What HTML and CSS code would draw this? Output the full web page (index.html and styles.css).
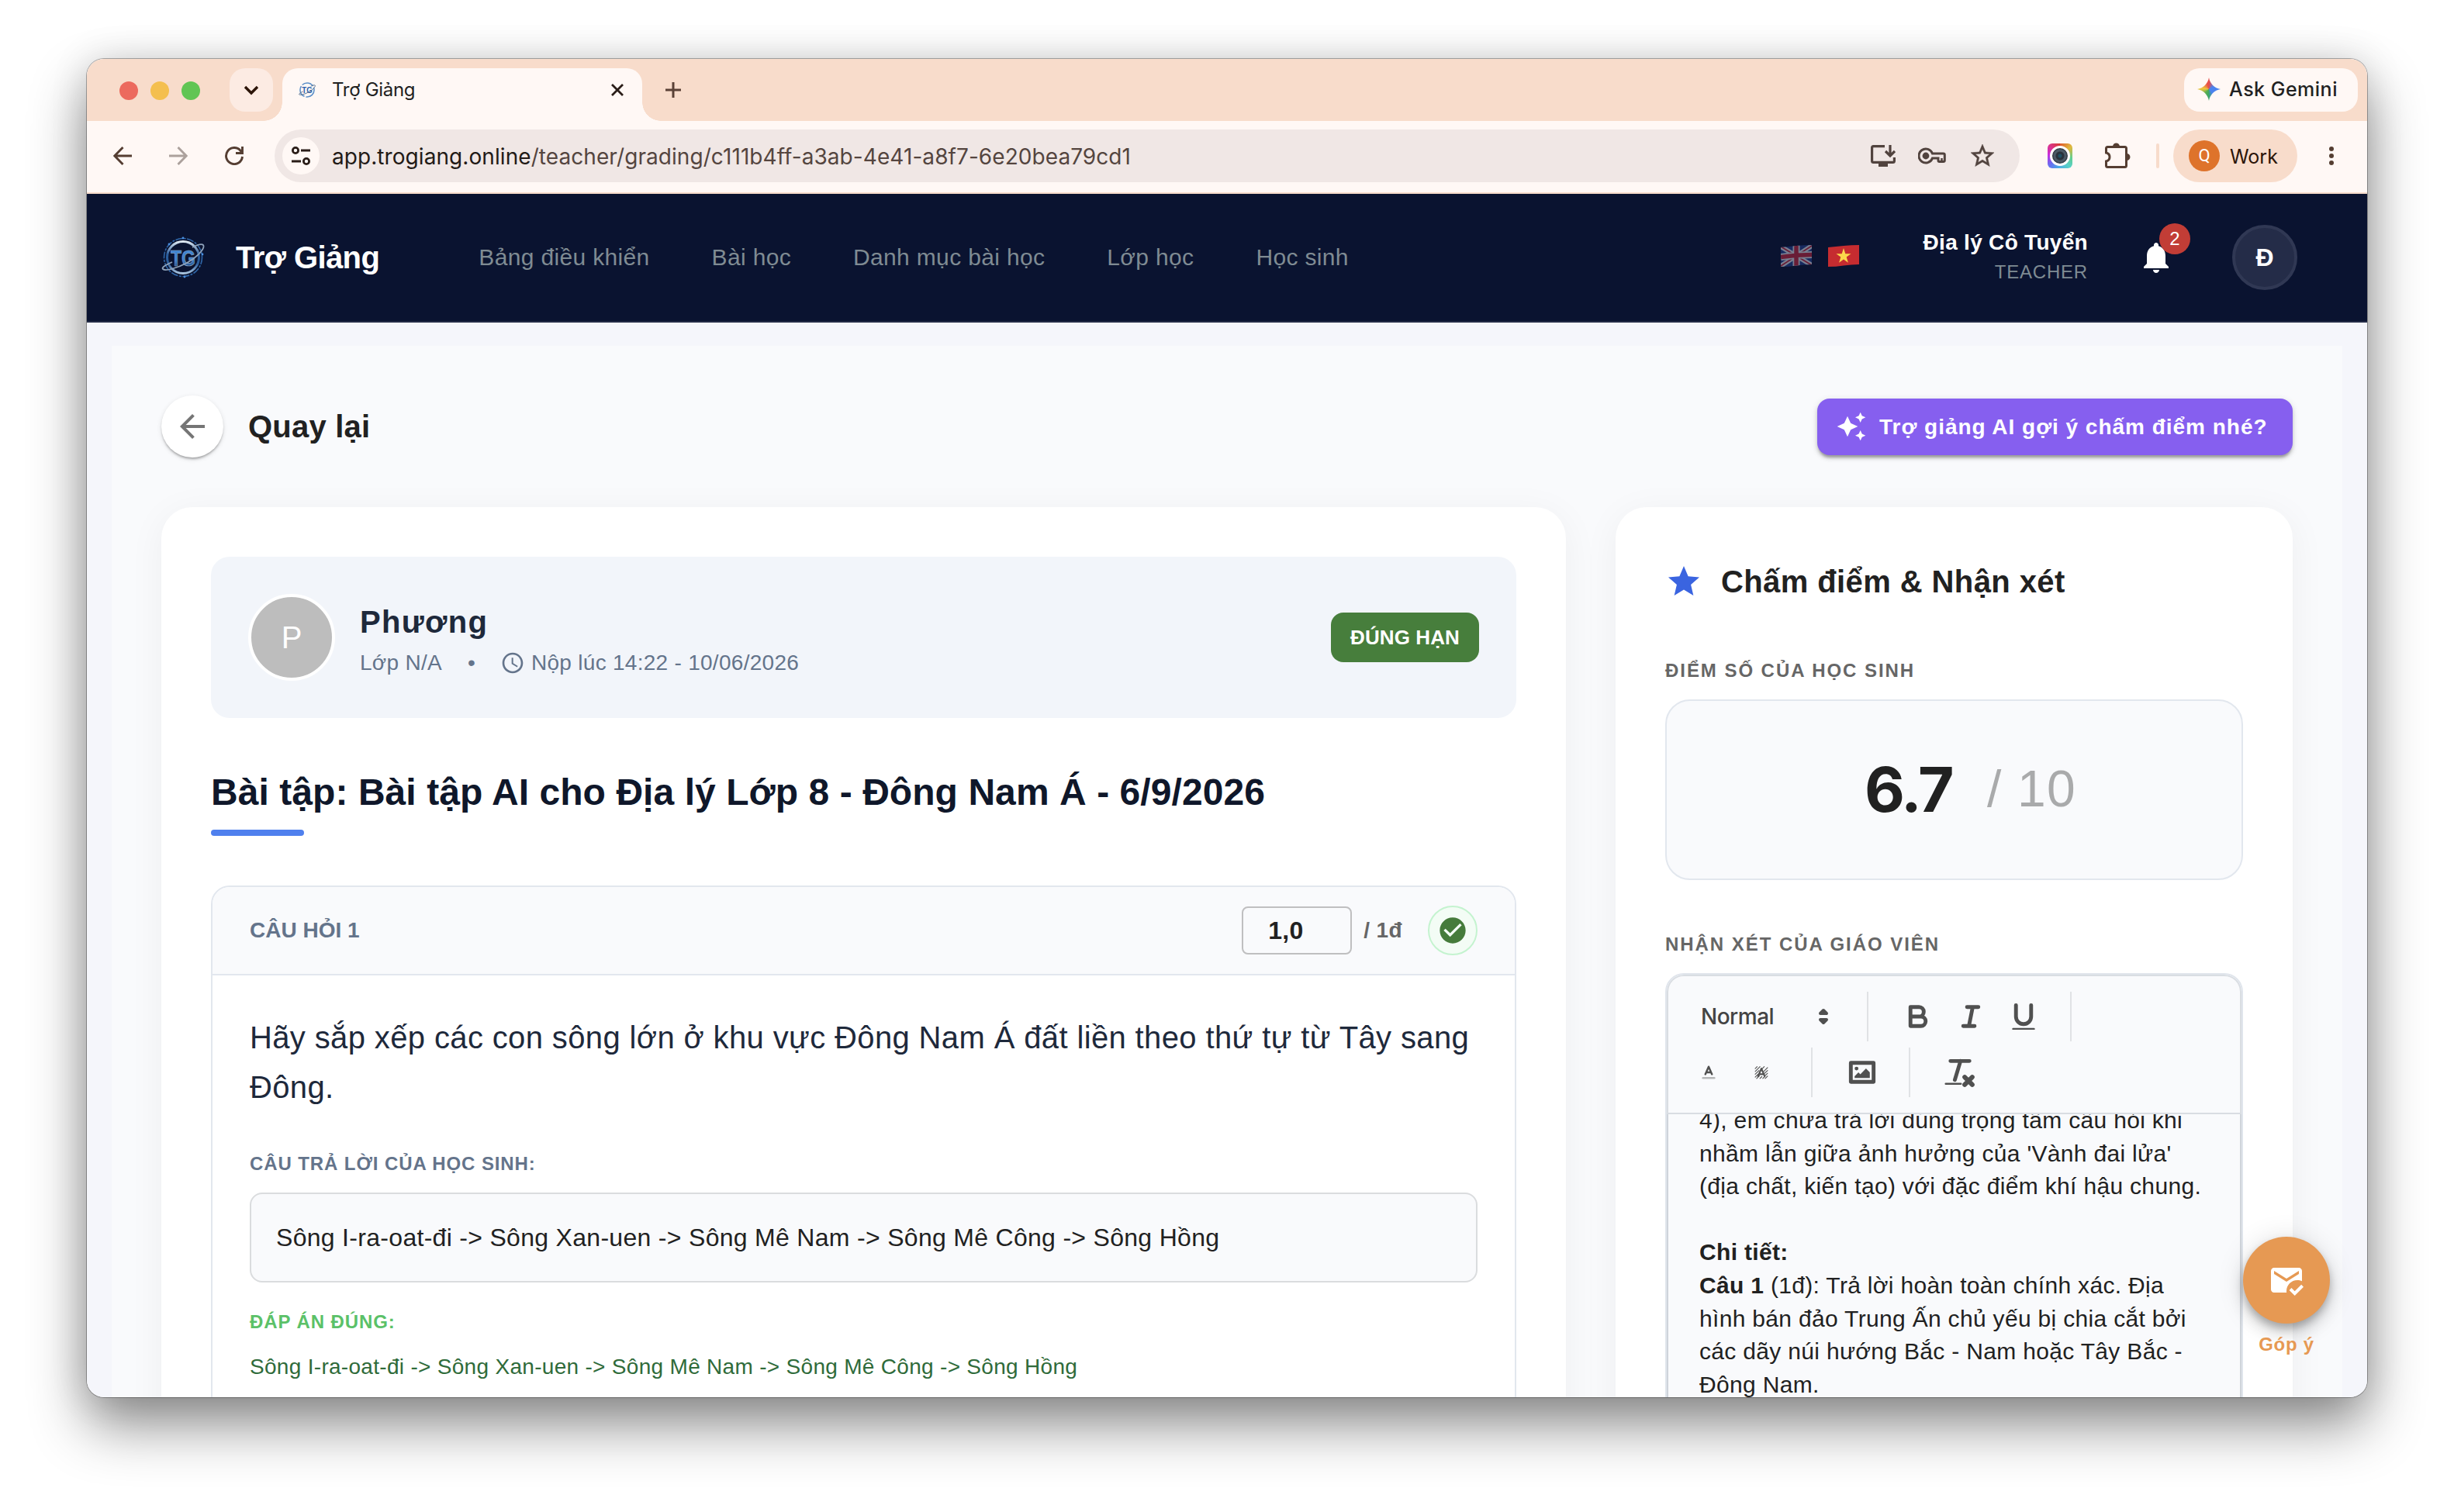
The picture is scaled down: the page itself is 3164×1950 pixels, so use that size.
FILE: index.html
```html
<!DOCTYPE html>
<html lang="vi">
<head>
    <meta charset="UTF-8">
    <meta name="viewport" content="width=device-width, initial-scale=1.0">
    <title>Trợ Giảng</title>
    <link rel="stylesheet" href="styles.css">
</head>
<body>
    <div class="window">
        <div class="tabstrip">
            <div class="lights"><i class="red"></i><i class="yellow"></i><i class="green"></i></div>
            <div class="tab-search">
                <svg width="20" height="20" viewBox="0 0 20 20"><path d="M2 6l8 8 8-8" fill="none" stroke="#2b1408" stroke-width="3.4"/></svg>
            </div>
            <div class="tab">
                <svg class="logo-text" width="22" height="22" viewBox="0 0 56 56">
                    <circle cx="28" cy="28" r="23" fill="none" stroke="#5c8fc8" stroke-width="4" stroke-dasharray="40 5"/>
                    <text x="28" y="38" font-size="29" textLength="34" lengthAdjust="spacingAndGlyphs" fill="#2a62ad">TG</text>
                    <path d="M14 33C5 38 0 41 2 43c3 3 18-1 31-8S57 16 54 13c-2-2-8 0-14 3" fill="none" stroke="#56708f" stroke-width="2.5"/>
                </svg>
                <span class="tab-title">Trợ Giảng</span>
                <svg width="16" height="16" viewBox="0 0 16 16"><path d="M1 1l14 14M15 1L1 15" stroke="#2a1d18" stroke-width="2.8"/></svg>
            </div>
            <svg class="new-tab" width="20" height="20" viewBox="0 0 20 20"><path d="M10 0v20M0 10h20" stroke="#5a4136" stroke-width="3"/></svg>
            <div class="gemini">
                <span class="spark"></span>
                <span class="gemini-text">Ask Gemini</span>
            </div>
        </div>

        <div class="toolbar">
            <div class="nav-btns">
                <svg width="24" height="24" viewBox="0 0 24 24"><path d="M12.5 1L1.8 12l10.7 11M2 12h22" fill="none" stroke="#553e32" stroke-width="2.9"/></svg>
                <svg width="24" height="24" viewBox="0 0 24 24"><path d="M11.5 1l10.7 11-10.7 11M22 12H0" fill="none" stroke="#aca19c" stroke-width="2.9"/></svg>
                <svg width="24" height="24" viewBox="0 0 24 24"><path d="M22.5 13A10.5 10.5 0 1 1 20 5.200l2 2.300M22.500 0v8.500H14" fill="none" stroke="#553e32" stroke-width="2.9"/></svg>
            </div>
            <div class="omnibox">
                <div class="site-info">
                    <svg width="26" height="24" viewBox="0 0 26 24" fill="none" stroke="#2a1d18" stroke-width="2.8"><circle cx="6" cy="5" r="3.6"/><path d="M13 5h12M1 19h12"/><circle cx="20" cy="19" r="3.6"/></svg>
                </div>
                <span class="url"><b>app.trogiang.online</b>/teacher/grading/c111b4ff-a3ab-4e41-a8f7-6e20bea79cd1</span>
                <svg width="32" height="28" viewBox="0 0 32 28" fill="none" stroke="#51433e" stroke-width="3.2"><path d="M18 1.600H3.500q-1.900 0-1.900 1.900v17q0 1.900 1.900 1.900h25q1.900 0 1.900-1.900V16M25 0v13M19 8l6 6 6-6"/><path d="M10 23h12v5H10z" fill="#51433e" stroke="none"/></svg>
                <svg width="36" height="22" viewBox="0 0 36 22"><path d="M18.500 8H32.500q1.800 0 1.800 1.800v7q0 1.800-1.800 1.800h-5q-1.500 0-1.500-1.800V14h-7.500A9 9 0 1 1 18.500 8z" fill="none" stroke="#51433e" stroke-width="3"/><circle cx="10" cy="11" r="4.400" fill="#51433e"/><path d="M30.500 14v4" stroke="#51433e" stroke-width="2.500"/></svg>
                <svg width="36" height="36" viewBox="0 0 24 24"><path d="M22 9.240l-7.190-.62L12 2 9.190 8.630 2 9.240l5.460 4.730L5.820 21 12 17.270 18.180 21l-1.630-7.030L22 9.240zM12 15.400l-3.760 2.270 1-4.280-3.320-2.880 4.380-.38L12 6.100l1.710 4.040 4.380.38-3.320 2.880 1 4.280L12 15.400z" fill="#51433e" stroke="#51433e" stroke-width=".3"/></svg>
            </div>
            <div class="camera"><i></i></div>
            <svg class="puzzle" width="34" height="34" viewBox="0 0 34 34"><path d="M2.500 7.500q0-2 2-2h22q2 0 2 2v22q0 2-2 2h-22q-2 0-2-2V24q4.500-1 4.500-5.500t-4.500-5.500z" fill="none" stroke="#553e32" stroke-width="3"/><path d="M11 5a4.500 4.500 0 0 1 9 0zM29 14a4.500 4.500 0 0 1 0 9z" fill="#553e32"/></svg>
            <i class="divider"></i>
            <div class="profile"><span class="profile-q">Q</span><span class="profile-name">Work</span></div>
            <svg class="dots" width="6" height="24" viewBox="0 0 6 24" fill="#553e32"><circle cx="3" cy="3" r="3"/><circle cx="3" cy="12" r="3"/><circle cx="3" cy="21" r="3"/></svg>
        </div>

        <nav class="navbar">
            <svg class="logo-text" width="56" height="56" viewBox="0 0 56 56">
                <defs>
                    <linearGradient id="blue" x1="0" y1="0" x2="0" y2="1"><stop offset="0" stop-color="#3f86d6"/><stop offset=".6" stop-color="#3c7fcc"/><stop offset="1" stop-color="#16305c"/></linearGradient>
                    <linearGradient id="ring" x1="0" y1="0" x2="0" y2="1"><stop offset="0" stop-color="#dfe9f2"/><stop offset=".4" stop-color="#2a5d9c"/><stop offset=".7" stop-color="#2a5d9c"/><stop offset="1" stop-color="#a9c4de"/></linearGradient>
                </defs>
                <circle cx="28" cy="28" r="24.500" fill="none" stroke="#2f66a8" stroke-width="1.600" stroke-dasharray="9 1.500 3 1.500"/>
                <circle cx="28" cy="28" r="20.500" fill="none" stroke="url(#ring)" stroke-width="3"/>
                <text x="28" y="39" font-size="30" textLength="32" lengthAdjust="spacingAndGlyphs" fill="url(#blue)" stroke="#8aa8c8" stroke-width=".7">TG</text>
                <path d="M14 34C5 38 0 41 2 43c3 3 18-1 31-8S57 16 54 12c-2-2-8 0-14 3" fill="none" stroke="#8fa3bb" stroke-width="1.800"/>
                <circle cx="28" cy="3" r="1.400" fill="#4b8fe0"/><circle cx="53" cy="24" r="1.400" fill="#4b8fe0"/><circle cx="10" cy="11" r="1.400" fill="#4b8fe0"/><circle cx="30" cy="53" r="1.400" fill="#4b8fe0"/>
            </svg>
            <span class="brand">Trợ Giảng</span>
            <div class="menu">
                <a>Bảng điều khiển</a>
                <a>Bài học</a>
                <a>Danh mục bài học</a>
                <a>Lớp học</a>
                <a>Học sinh</a>
            </div>
            <div class="flags">
                <svg class="off" width="40" height="28" viewBox="0 0 40 28">
                    <clipPath id="wave"><path d="M0 3q10-1 20-2t20-1v25q-10 0-20 1.500T0 28z"/></clipPath>
                    <g clip-path="url(#wave)">
                        <path d="M0 0h40v28H0z" fill="#24428f"/>
                        <path d="M0 2l40 24M0 27L40 1" stroke="#e6e8ee" stroke-width="6"/>
                        <path d="M0 2l40 24M0 27L40 1" stroke="#c8283c" stroke-width="1.800"/>
                        <path d="M20 0v28M0 15.500q20-3 40-3" fill="none" stroke="#e6e8ee" stroke-width="9"/>
                        <path d="M20 0v28M0 15.500q20-3 40-3" fill="none" stroke="#c8283c" stroke-width="5.500"/>
                    </g>
                </svg>
                <svg width="40" height="28" viewBox="0 0 40 28">
                    <g clip-path="url(#wave)">
                        <path d="M0 0h40v28H0z" fill="#c62c30"/>
                        <path d="M20 4l2.300 7.200h7.200l-5.800 4.400 2.200 7.200-5.900-4.400-5.900 4.400 2.200-7.200-5.800-4.400h7.200z" fill="#fbd84b"/>
                    </g>
                </svg>
            </div>
            <div class="user">
                <span class="user-name">Địa lý Cô Tuyển</span>
                <span class="user-role">TEACHER</span>
            </div>
            <div class="bell">
                <svg width="48" height="48" viewBox="0 0 24 24" fill="#fff"><path d="M12 22c1.100 0 2-.9 2-2h-4c0 1.100.89 2 2 2zm6-6v-5c0-3.070-1.640-5.640-4.500-6.320V4c0-.83-.67-1.500-1.500-1.500s-1.500.67-1.500 1.500v.68C7.630 5.360 6 7.920 6 11v5l-2 2v1h16v-1l-2-2z"/></svg>
                <span class="badge">2</span>
            </div>
            <span class="avatar-me">Đ</span>
        </nav>

        <main class="page">
            <div class="page-head">
                <span class="back">
                    <svg width="48" height="48" viewBox="0 0 24 24" fill="#757575"><path d="M20 11H7.830l5.590-5.590L12 4l-8 8 8 8 1.410-1.410L7.830 13H20v-2z"/></svg>
                </span>
                <span class="back-text">Quay lại</span>
                <span class="ai-btn">
                    <svg width="40" height="40" viewBox="0 0 24 24" fill="#fff"><path d="M19 9l1.250-2.750L23 5l-2.750-1.250L19 1l-1.250 2.750L15 5l2.750 1.250L19 9zm-7.500.5L9 4 6.500 9.500 1 12l5.500 2.500L9 20l2.500-5.500L17 12l-5.500-2.500zM19 15l-1.250 2.750L15 19l2.750 1.250L19 23l1.250-2.750L23 19l-2.750-1.250L19 15z"/></svg>
                    <span class="ai-text">Trợ giảng AI gợi ý chấm điểm nhé?</span>
                </span>
            </div>

            <div class="columns">
                <section class="card">
                    <div class="student">
                        <span class="avatar">P</span>
                        <div class="student-info">
                            <div class="student-name">Phương</div>
                            <div class="student-meta">
                                <span>Lớp N/A</span><span class="dot">•</span>
                                <svg width="32" height="32" viewBox="0 0 24 24" fill="#64748b"><path d="M11.990 2C6.470 2 2 6.480 2 12s4.470 10 9.990 10C17.520 22 22 17.520 22 12S17.520 2 11.990 2zM12 20c-4.420 0-8-3.580-8-8s3.580-8 8-8 8 3.580 8 8-3.580 8-8 8zm.5-13H11v6l5.250 3.150.75-1.230-4.500-2.670z"/></svg>
                                <span class="student-time">Nộp lúc 14:22 - 10/06/2026</span>
                            </div>
                        </div>
                        <span class="chip">ĐÚNG HẠN</span>
                    </div>

                    <h1 class="title">Bài tập: Bài tập AI cho Địa lý Lớp 8 - Đông Nam Á - 6/9/2026</h1>
                    <div class="title-line"></div>

                    <div class="question">
                        <div class="question-head">
                            <span class="question-no">CÂU HỎI 1</span>
                            <span class="point">1,0</span>
                            <span class="point-max">/ 1đ</span>
                            <span class="check">
                                <svg width="40" height="40" viewBox="0 0 24 24" fill="#457b3b"><path d="M12 2C6.480 2 2 6.480 2 12s4.480 10 10 10 10-4.480 10-10S17.520 2 12 2zm-2 15l-5-5 1.410-1.410L10 14.170l7.590-7.590L19 8l-9 9z"/></svg>
                            </span>
                        </div>
                        <div class="question-body">
                            <p class="question-text">Hãy sắp xếp các con sông lớn ở khu vực Đông Nam Á đất liền theo thứ tự từ Tây sang<br>Đông.</p>
                            <div class="label">CÂU TRẢ LỜI CỦA HỌC SINH:</div>
                            <div class="answer">Sông I-ra-oat-đi -&gt; Sông Xan-uen -&gt; Sông Mê Nam -&gt; Sông Mê Công -&gt; Sông Hồng</div>
                            <div class="label label-ok">ĐÁP ÁN ĐÚNG:</div>
                            <div class="answer-ok">Sông I-ra-oat-đi -&gt; Sông Xan-uen -&gt; Sông Mê Nam -&gt; Sông Mê Công -&gt; Sông Hồng</div>
                        </div>
                    </div>
                </section>

                <section class="card">
                    <h2 class="side-title">
                        <svg width="48" height="48" viewBox="0 0 24 24" fill="#3a64e0"><path d="M12 17.270L18.180 21l-1.640-7.030L22 9.240l-7.190-.61L12 2 9.190 8.630 2 9.240l5.460 4.730L5.820 21z"/></svg>
                        <span>Chấm điểm &amp; Nhận xét</span>
                    </h2>
                    <div class="side-label">ĐIỂM SỐ CỦA HỌC SINH</div>
                    <div class="score"><span class="score-num">6.7</span><span class="score-max">/ 10</span></div>
                    <div class="side-label">NHẬN XÉT CỦA GIÁO VIÊN</div>
                    <div class="editor">
                        <div class="editor-bar">
                            <div class="bar-row">
                                <span class="format">
                                    <span>Normal</span>
                                    <svg class="ql" width="36" height="36" viewBox="0 0 18 18"><path class="solid" d="M7 11l2 2 2-2zM7 7l2-2 2 2z"/></svg>
                                </span>
                                <span class="tools">
                                    <svg class="ql" width="44" height="44" viewBox="0 0 18 18"><path d="M5 4h4.500a2.500 2.500 0 0 1 0 5H5zM5 9h5.500a2.500 2.500 0 0 1 0 5H5z"/></svg>
                                    <svg class="ql" width="44" height="44" viewBox="0 0 18 18"><path d="M7 4h6M5 14h6M8 14l2-10"/></svg>
                                    <svg class="ql" width="44" height="44" viewBox="0 0 18 18"><path d="M5 3v6a4 4 0 0 0 8 0V3"/><rect class="bar" x="3" y="15" width="12" height="1" rx=".5"/></svg>
                                </span>
                            </div>
                            <div class="bar-row">
                                <span class="tools colors">
                                    <svg class="ql" width="22" height="22" viewBox="0 0 18 18"><path d="M3 15h12" opacity=".4"/><path d="M5.500 11L9 3l3.500 8M6.400 9h5.200"/></svg>
                                    <svg class="ql" width="22" height="22" viewBox="0 0 18 18"><path d="M2.500 5l2-2M2.500 8l5-5M2.500 11l4-4M2.500 14l3-3M4 15.500l3-3M7.500 15.500l2-2M10.500 15.500l2-2M13 15.500l2.500-2.500M13.500 12l2-2M12.500 10l3-3M11.500 8l4-4M10 5l2-2" stroke-width=".9"/><path d="M5.500 13L9 5l3.500 8M6.400 11h5.200" stroke-width="1.800"/></svg>
                                </span>
                                <span class="tools one">
                                    <svg class="ql" width="44" height="44" viewBox="0 0 18 18"><rect x="3" y="4" width="12" height="10"/><circle class="bar" cx="6" cy="7" r="1"/><path class="bar" d="M5 12v-1l2-2 1 1 3-3 2 2v3z"/></svg>
                                </span>
                                <span class="tools one last">
                                    <svg class="ql" width="44" height="44" viewBox="0 0 18 18"><path d="M5 3h10M7.300 13L10.300 3" transform="translate(-1)"/><path d="M11.500 11.500l4 4M15.500 11.500l-4 4" stroke-width="2.400"/><rect class="bar" x="1" y="14.500" width="9" height="1" rx=".5"/></svg>
                                </span>
                            </div>
                        </div>
                        <div class="editor-body">
                            <div class="editor-text">
                                4), em chưa trả lời đúng trọng tâm câu hỏi khi<br>
                                nhầm lẫn giữa ảnh hưởng của 'Vành đai lửa'<br>
                                (địa chất, kiến tạo) với đặc điểm khí hậu chung.<br>
                                <br>
                                <b>Chi tiết:</b><br>
                                <b>Câu 1</b> (1đ): Trả lời hoàn toàn chính xác. Địa<br>
                                hình bán đảo Trung Ấn chủ yếu bị chia cắt bởi<br>
                                các dãy núi hướng Bắc - Nam hoặc Tây Bắc -<br>
                                Đông Nam.
                            </div>
                        </div>
                    </div>
                </section>
            </div>
        </main>

        <div class="feedback">
            <span class="fab">
                <svg width="48" height="48" viewBox="0 0 24 24" fill="#fff"><path d="M12 19c0-3.870 3.130-7 7-7 1.080 0 2.090.25 3 .68V6c0-1.100-.9-2-2-2H4c-1.100 0-2 .9-2 2v12c0 1.100.9 2 2 2h8.080c-.05-.33-.08-.66-.08-1zM4 6l8 5 8-5v2l-8 5-8-5V6zm13.340 16l-3.540-3.540 1.410-1.410 2.120 2.120 4.240-4.240L23 16.340 17.340 22z"/></svg>
            </span>
            <span class="fab-text">Góp ý</span>
        </div>
    </div>
</body>
</html>
```
FILE: styles.css
```css
* {
    box-sizing: border-box;
}
body {
    margin: 0;
    height: 1950px;
    overflow: hidden;
    background: white;
    font-family: "Liberation Sans", Arial, sans-serif;
    color: #212121;
}
svg {
    display: block;
    flex-shrink: 0;
}
.window {
    position: relative;
    width: 2940px;
    height: 1726px;
    margin: 76px 0 0 112px;
    border-radius: 22px;
    background: #f5f6fb;
    overflow: hidden;
}
body::before {
    content: "";
    position: absolute;
    left: 112px;
    top: 76px;
    width: 2940px;
    height: 1726px;
    border-radius: 22px;
    box-shadow: 0 0 0 1px rgba(0, 0, 0, .3), 0 36px 72px rgba(0, 0, 0, .45), 0 0 50px rgba(0, 0, 0, .12);
}

/* browser chrome */
.tabstrip {
    display: flex;
    height: 80px;
    padding: 12px 12px 0 42px;
    background: #f8dccb;
    font-family: Inter, sans-serif;
    font-size: 24px;
}
.lights {
    display: flex;
    gap: 16px;
    padding-top: 17px;
}
.lights i {
    width: 24px;
    height: 24px;
    border-radius: 50%;
}
.red {
    background: #ec6a5e;
}
.yellow {
    background: #f4bf4f;
}
.green {
    background: #61c554;
}
.tab-search {
    display: flex;
    align-items: center;
    justify-content: center;
    width: 56px;
    height: 56px;
    margin-left: 38px;
    border-radius: 20px;
    background: #fcebe3;
}
.tab {
    position: relative;
    display: flex;
    align-items: center;
    width: 464px;
    height: 68px;
    margin-left: 12px;
    padding: 0 24px 13px 21px;
    border-radius: 20px 20px 0 0;
    background: #fff8f5;
}
.tab::before,
.tab::after {
    content: "";
    position: absolute;
    bottom: 0;
    width: 24px;
    height: 24px;
}
.tab::before {
    left: -24px;
    background: radial-gradient(circle at 0 0, transparent 23.5px, #fff8f5 24px);
}
.tab::after {
    right: -24px;
    background: radial-gradient(circle at 100% 0, transparent 23.5px, #fff8f5 24px);
}
.tab-title {
    flex: 1;
    margin-left: 21px;
    letter-spacing: -.3px;
}
.new-tab {
    margin: 18px 0 0 30px;
}
.gemini {
    display: flex;
    align-items: center;
    width: 224px;
    height: 56px;
    margin-left: auto;
    padding: 0 0 2px 17px;
    border-radius: 20px;
    background: #fff8f5;
    font-size: 25px;
    font-weight: 500;
    letter-spacing: .5px;
}
.spark {
    width: 30px;
    height: 30px;
    margin-right: 11px;
    background: conic-gradient(#e8504a 0, #4a83ee 60deg, #4a83ee 140deg, #3fa862 185deg, #5cae52 225deg, #f0c63c 275deg, #e8504a 345deg);
    clip-path: path("M15 0C16.500 8 22 13.500 30 15C22 16.500 16.500 22 15 30C13.500 22 8 16.500 0 15C8 13.500 13.500 8 15 0Z");
}
.toolbar {
    display: flex;
    align-items: center;
    height: 94px;
    padding-bottom: 2px;
    border-bottom: 2px solid #f8dccb;
    background: #fff8f5;
    font-family: Inter, sans-serif;
}
.nav-btns {
    display: flex;
    gap: 48px;
    padding: 0 40px 0 34px;
}
.omnibox {
    display: flex;
    align-items: center;
    width: 2250px;
    height: 68px;
    padding: 0 30px 0 10px;
    border-radius: 34px;
    background: #f0e7e5;
}
.omnibox > svg {
    margin-left: 29px;
}
.site-info {
    display: flex;
    align-items: center;
    justify-content: center;
    width: 48px;
    height: 48px;
    border-radius: 50%;
    background: #fff8f5;
}
.url {
    flex: 1;
    margin-left: 16px;
    padding-top: 1px;
    font-size: 28px;
    letter-spacing: .07px;
    color: #54453f;
}
.url b {
    font-weight: 400;
    color: #221a16;
}
.camera {
    display: flex;
    align-items: center;
    justify-content: center;
    width: 32px;
    height: 32px;
    margin-left: 36px;
    border-radius: 6px;
    background: conic-gradient(#e05a2c, #e0b83c 50deg, #62cf90 100deg, #58d0c8 140deg, #4aa8e8 190deg, #6a6cf0 230deg, #c82ce0 275deg, #dc3488 315deg, #d83c30);
}
.camera i {
    width: 26px;
    height: 26px;
    border: 3px solid white;
    border-radius: 50%;
    background: radial-gradient(#1d5064 0 2px, #28323b 3px 5px, #4a5965 6px 8px, #333b44 9px);
}
.puzzle {
    margin-left: 41px;
}
.divider {
    width: 4px;
    height: 32px;
    margin: 0 18px 0 33px;
    border-radius: 2px;
    background: #f8dccb;
}
.profile {
    display: flex;
    align-items: center;
    width: 160px;
    height: 68px;
    padding-left: 20px;
    border-radius: 34px;
    background: #f8dccb;
    color: #2b1408;
}
.profile-q {
    width: 40px;
    height: 40px;
    margin-right: 13px;
    border-radius: 50%;
    background: #de732b;
    font: 22px/40px Roboto, sans-serif;
    text-align: center;
    color: white;
}
.profile-name {
    padding-top: 1px;
    font-size: 25px;
}
.dots {
    margin-left: 41px;
}

/* app navbar */
.navbar {
    display: flex;
    align-items: center;
    height: 166px;
    padding: 0 90px 0 96px;
    border-bottom: 2px solid #232b45;
    background: #0a1330;
    color: white;
}
.logo-text {
    text-anchor: middle;
    font-family: "Liberation Sans", Arial, sans-serif;
    font-weight: bold;
}
.brand {
    margin-left: 40px;
    font-size: 40px;
    font-weight: bold;
    letter-spacing: -.6px;
}
.menu {
    display: flex;
    gap: 80px;
    margin-left: 128px;
    font-size: 30px;
    letter-spacing: .34px;
    color: #7f8b93;
}
.flags {
    display: flex;
    gap: 21px;
    margin: 0 0 4px auto;
}
.off {
    opacity: .5;
}
.user {
    display: flex;
    flex-direction: column;
    align-items: flex-end;
    margin: -2px 0 0 83px;
}
.user-name {
    font-size: 28px;
    line-height: 40px;
    font-weight: bold;
    letter-spacing: .3px;
}
.user-role {
    font-size: 24px;
    line-height: 36px;
    letter-spacing: .8px;
    color: #7f8b93;
}
.bell {
    position: relative;
    margin: 0 74px 0 64px;
}
.badge {
    position: absolute;
    left: 28px;
    top: -20px;
    width: 40px;
    height: 40px;
    border-radius: 50%;
    background: #c23d36;
    font-size: 24px;
    line-height: 40px;
    text-align: center;
}
.avatar-me {
    width: 84px;
    height: 84px;
    border: 4px solid #303854;
    border-radius: 50%;
    background: #242c48;
    font-size: 32px;
    font-weight: bold;
    line-height: 76px;
    text-align: center;
}

/* page */
.page {
    margin: 30px 32px 0;
    padding: 64px;
    background: #f9fafc;
}
.page-head {
    display: flex;
    align-items: center;
    height: 80px;
    margin-bottom: 64px;
}
.back {
    display: flex;
    align-items: center;
    justify-content: center;
    width: 80px;
    height: 80px;
    border-radius: 50%;
    background: white;
    box-shadow: 0 3px 3px -1px rgba(0, 0, 0, .28), 0 2px 6px rgba(0, 0, 0, .12);
}
.back-text {
    margin-left: 32px;
    font-size: 40px;
    font-weight: bold;
    letter-spacing: .2px;
}
.ai-btn {
    display: flex;
    align-items: center;
    width: 613px;
    height: 73px;
    margin-left: auto;
    padding-left: 24px;
    border-radius: 16px;
    background: #865fef;
    color: white;
    font-size: 28px;
    font-weight: bold;
    letter-spacing: .98px;
    box-shadow: 0 5px 3px -2px rgba(0, 0, 0, .22), 0 4px 5px rgba(0, 0, 0, .14), 0 2px 10px rgba(0, 0, 0, .12);
}
.ai-text {
    margin-left: 16px;
    padding-top: 1px;
    white-space: nowrap;
}
.columns {
    display: grid;
    grid-template-columns: 1811px 873px;
    gap: 64px;
}
.card {
    height: 1400px;
    padding: 64px;
    border-radius: 40px;
    background: white;
    box-shadow: 0 8px 48px rgba(0, 0, 0, .05);
}
.student {
    display: flex;
    align-items: center;
    height: 208px;
    padding: 48px;
    border-radius: 24px;
    background: #f2f5fa;
}
.avatar {
    width: 112px;
    height: 112px;
    margin-right: 32px;
    border: 4px solid white;
    border-radius: 50%;
    background: #bdbdbd;
    font-size: 40px;
    line-height: 104px;
    text-align: center;
    color: white;
}
.student-name {
    font-size: 40px;
    font-weight: bold;
    line-height: 64px;
    letter-spacing: 1.3px;
    color: #1e293b;
}
.student-meta {
    display: flex;
    align-items: center;
    height: 40px;
    padding-top: 1px;
    font-size: 28px;
    letter-spacing: .28px;
    color: #64748b;
}
.dot {
    margin: 0 32px 0 33px;
}
.student-time {
    margin-left: 8px;
}
.chip {
    width: 191px;
    height: 64px;
    margin-left: auto;
    border-radius: 16px;
    background: #477e3c;
    font-size: 26px;
    font-weight: bold;
    line-height: 64px;
    letter-spacing: .1px;
    text-align: center;
    color: white;
}
.title {
    margin: 64px 0 16px;
    font-size: 48px;
    line-height: 64px;
    letter-spacing: .06px;
    color: #0f172a;
}
.title-line {
    width: 120px;
    height: 8px;
    margin-bottom: 64px;
    border-radius: 4px;
    background: #4f80ee;
}
.question {
    height: 900px;
    border: 2px solid #e2e7ee;
    border-radius: 24px;
    overflow: hidden;
}
.question-head {
    display: flex;
    align-items: center;
    height: 114px;
    padding: 0 48px;
    border-bottom: 2px solid #e2e7ee;
    background: #f9fafc;
    font-size: 28px;
    font-weight: bold;
}
.question-no {
    flex: 1;
    color: #64748b;
}
.point {
    width: 142px;
    height: 62px;
    padding-left: 32px;
    border: 2px solid #bfbfc0;
    border-radius: 8px;
    font-size: 32px;
    line-height: 59px;
    letter-spacing: .3px;
}
.point-max {
    margin: 0 33px 0 15px;
    letter-spacing: .4px;
    color: #666;
}
.check {
    display: flex;
    align-items: center;
    justify-content: center;
    width: 64px;
    height: 64px;
    border: 2px solid #c4f3cf;
    border-radius: 50%;
    background: #f3fcf5;
}
.question-body {
    padding: 48px;
}
.question-text {
    margin: 0 0 47px;
    font-size: 40px;
    line-height: 64px;
    letter-spacing: .37px;
    white-space: nowrap;
    color: #1e293b;
}
.label {
    font-size: 24px;
    font-weight: bold;
    line-height: 40px;
    letter-spacing: .9px;
    color: #64748b;
}
.answer {
    height: 116px;
    margin: 17px 0 31px;
    padding-left: 32px;
    border: 2px solid #dadcde;
    border-radius: 16px;
    background: #f9fafc;
    font-size: 32px;
    line-height: 112px;
    letter-spacing: .3px;
}
.label-ok {
    margin-bottom: 18px;
    color: #5bc168;
}
.answer-ok {
    font-size: 28px;
    line-height: 40px;
    letter-spacing: .3px;
    color: #2f6b3a;
}

/* grading side */
.side-title {
    display: flex;
    align-items: center;
    gap: 24px;
    height: 64px;
    margin: 0;
    font-size: 40px;
    letter-spacing: .4px;
}
.side-label {
    margin: 63px 0 17px;
    font-size: 24px;
    font-weight: bold;
    line-height: 40px;
    letter-spacing: 1.95px;
    color: #666;
}
.score {
    display: flex;
    align-items: center;
    height: 233px;
    padding-left: 255px;
    border: 2px solid #e2e7ee;
    border-radius: 32px;
    background: #f9fafc;
}
.score-num {
    padding-bottom: 2px;
    font-family: Inter, sans-serif;
    font-size: 80px;
    font-weight: 700;
    letter-spacing: -2.6px;
}
.score-max {
    margin-left: 45px;
    padding-bottom: 3px;
    font-size: 66px;
    letter-spacing: 1.2px;
    color: #a9aaab;
}
.editor {
    height: 800px;
    border: 2px solid #e0e5ec;
    border-radius: 24px;
    overflow: hidden;
    background: #f9fafc;
}
.editor-bar {
    height: 180px;
    padding-top: 20px;
    border: 2px solid #d9dde2;
    border-radius: 22px 22px 0 0;
}
.bar-row {
    display: flex;
    height: 64px;
    margin-bottom: 8px;
}
.format {
    display: flex;
    align-items: center;
    width: 258px;
    padding-left: 42px;
    border-right: 2px solid #e0e2e5;
    font: 500 28px Inter, sans-serif;
    letter-spacing: -.5px;
    color: #444;
}
.format svg {
    margin-left: auto;
    margin-right: 38px;
}
.tools {
    display: flex;
    align-items: center;
    gap: 24px;
    width: 262px;
    padding-left: 42px;
    border-right: 2px solid #e0e2e5;
}
.colors {
    gap: 46px;
    width: 186px;
    padding-left: 41px;
}
.one {
    width: 126px;
    padding-left: 42px;
}
.last {
    border: 0;
}
.ql {
    fill: none;
    stroke: #505050;
    stroke-width: 2;
    stroke-linecap: round;
    stroke-linejoin: round;
}
.solid {
    fill: #505050;
}
.bar {
    fill: #505050;
    stroke: none;
}
.editor-body {
    height: 700px;
    padding: 0 0 0 40px;
    border: 2px solid #cfd4da;
    border-top: 0;
    overflow: hidden;
}
.editor-text {
    margin-top: -13px;
    font-size: 30px;
    line-height: 42.6px;
    letter-spacing: .32px;
    white-space: nowrap;
}

/* floating feedback button */
.feedback {
    position: absolute;
    right: 48px;
    bottom: 50px;
    width: 112px;
    text-align: center;
}
.fab {
    display: flex;
    align-items: center;
    justify-content: center;
    width: 112px;
    height: 112px;
    border-radius: 50%;
    background: #e69953;
    box-shadow: 0 6px 10px rgba(0, 0, 0, .2), 0 12px 20px rgba(0, 0, 0, .14), 0 2px 36px rgba(0, 0, 0, .12);
}
.fab-text {
    display: block;
    margin-top: 9px;
    font-size: 24px;
    font-weight: bold;
    line-height: 36px;
    letter-spacing: .7px;
    color: #e69953;
}
```
